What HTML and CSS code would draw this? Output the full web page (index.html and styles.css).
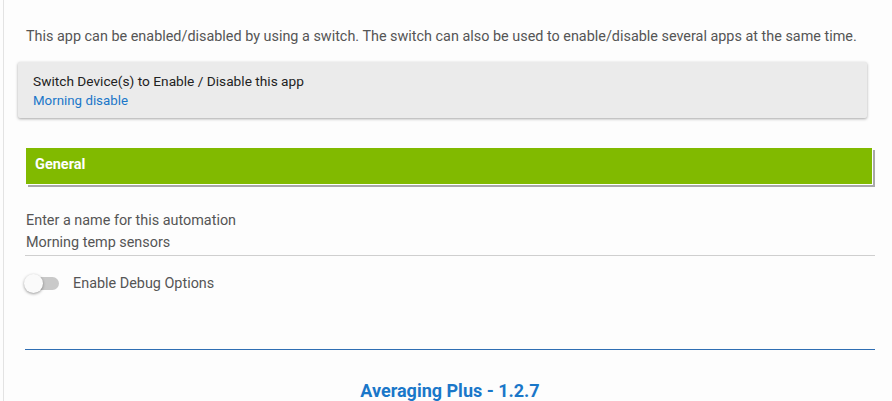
FILE: index.html
```html
<!DOCTYPE html>
<html>
<head>
<meta charset="utf-8">
<title>Averaging Plus</title>
<link rel="stylesheet" href="styles.css">
</head>
<body>
  <div class="page">
    <p class="intro">This app can be enabled/disabled by using a switch. The switch can also be used to enable/disable several apps at the same time.</p>

    <div class="card">
      <div class="card-title">Switch Device(s) to Enable / Disable this app</div>
      <div class="card-value">Morning disable</div>
    </div>

    <div class="section-head">General</div>

    <div class="field">
      <div class="field-label">Enter a name for this automation</div>
      <div class="field-value">Morning temp sensors</div>
    </div>

    <div class="toggle-row">
      <span class="toggle"><span class="knob"></span></span>
      <span class="toggle-label">Enable Debug Options</span>
    </div>

    <hr class="divider">

    <div class="footer-title">Averaging Plus - 1.2.7</div>
  </div>
</body>
</html>
```

FILE: styles.css
```css
*{
  margin: 0;
  padding: 0;
  box-sizing: border-box;
}
body{
  background: #fdfdfd;
  font-family: Roboto, "Liberation Sans", sans-serif;
  font-size: 14.4px;
  color: #555;
}
.page{
  margin-left: 3px;
  border-left: 1px solid #e3e3e3;
  padding: 28px 16px 0 14px;
  min-height: 401px;
}
.intro{
  line-height: 18px;
  margin-left: 8px;
}
.card{
  margin: 16px 9px 0 0;
  background: #ebebeb;
  border-radius: 2px;
  box-shadow: 0 1px 3px rgba(0,0,0,.35);
  padding: 10px 15px 8px;
  line-height: 19px;
  font-size: 13.7px;
}
.card-title{
  color: #222;
}
.card-value{
  color: #1a77c9;
  font-size: 13.3px;
}
.section-head{
  margin: 30px 3px 0 8px;
  height: 37px;
  background: #81ba00;
  border-right: 1px solid #fff;
  border-bottom: 1px solid #fff;
  box-shadow: 2px 2px 0 #a9a9a9;
  color: #fff;
  font-weight: bold;
  font-size: 14.5px;
  line-height: 33px;
  padding-left: 9px;
}
.field{
  margin: 27px 1px 0 7px;
  border-bottom: 1px solid #cfcfcf;
  padding-bottom: 3px;
}
.field-label,
.field-value{
  line-height: 18px;
  padding-left: 1px;
}
.field-label{
  margin-bottom: 4px;
}
.toggle-row{
  display: flex;
  align-items: center;
  margin: 17px 0 0 7px;
  height: 20px;
}
.toggle{
  position: relative;
  width: 31px;
  height: 13px;
  border-radius: 7px;
  background: #c9c9c9;
  margin-left: 3px;
}
.knob{
  position: absolute;
  left: -4px;
  top: -3px;
  width: 19px;
  height: 19px;
  border-radius: 50%;
  background: #fafafa;
  box-shadow: 0 1px 3px rgba(0,0,0,.4);
}
.toggle-label{
  margin-left: 14px;
}
.divider{
  border: 0;
  border-top: 1px solid #2f6eb3;
  margin: 56px 1px 0 7px;
}
.footer-title{
  margin-top: 30px;
  padding-left: 6px;
  text-align: center;
  color: #1a77c9;
  font-weight: bold;
  font-size: 18px;
  line-height: 21px;
}
```
